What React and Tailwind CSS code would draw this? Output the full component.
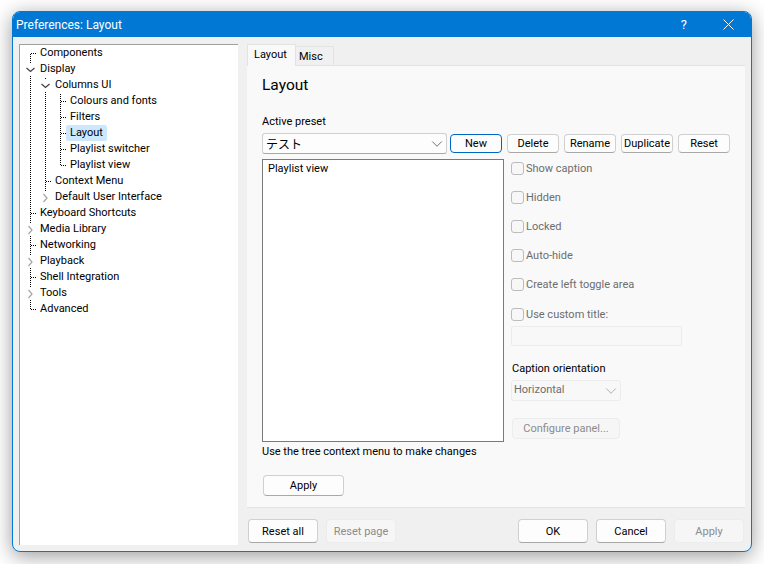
import { ChevronDown } from "lucide-react";

const FONT = "font-['Roboto','Open_Sans',sans-serif]";

// depth, kind, ancestors that keep their line running, last child at this level
const TREE = [
  { label: "Components", depth: 0, kind: "leaf", first: true },
  { label: "Display", depth: 0, kind: "open" },
  { label: "Columns UI", depth: 1, kind: "open", lines: [0] },
  { label: "Colours and fonts", depth: 2, kind: "leaf", lines: [0, 1] },
  { label: "Filters", depth: 2, kind: "leaf", lines: [0, 1] },
  { label: "Layout", depth: 2, kind: "leaf", lines: [0, 1], selected: true },
  { label: "Playlist switcher", depth: 2, kind: "leaf", lines: [0, 1] },
  { label: "Playlist view", depth: 2, kind: "leaf", lines: [0, 1], last: true },
  { label: "Context Menu", depth: 1, kind: "leaf", lines: [0] },
  { label: "Default User Interface", depth: 1, kind: "closed", lines: [0], last: true },
  { label: "Keyboard Shortcuts", depth: 0, kind: "leaf" },
  { label: "Media Library", depth: 0, kind: "closed" },
  { label: "Networking", depth: 0, kind: "leaf" },
  { label: "Playback", depth: 0, kind: "closed" },
  { label: "Shell Integration", depth: 0, kind: "leaf" },
  { label: "Tools", depth: 0, kind: "closed" },
  { label: "Advanced", depth: 0, kind: "leaf", last: true },
];

const colX = (d) => 10 + 15 * d;

// one pixel on, one pixel off, so the dots stay sharp like the native tree lines
function VDots({ x, from = 0, to = 16 }) {
  const dots = [];
  for (let y = from; y < to; y++) {
    if (y % 2 === 1) dots.push(<rect key={y} x={x} y={y} width="1" height="1" fill="#000" />);
  }
  return dots;
}

function HDots({ x, to }) {
  const dots = [];
  for (let i = x; i < to; i += 2) {
    dots.push(<rect key={i} x={i} y="8" width="1" height="1" fill="#000" />);
  }
  return dots;
}

function TreeGuides({ depth, kind, lines = [], first, last }) {
  const x = colX(depth);
  return (
    <svg width={16 + 15 * depth} height="16" className="shrink-0">
      {lines.map((d) => (
        <VDots key={d} x={colX(d)} />
      ))}
      {kind === "leaf" ? (
        <>
          <VDots x={x} from={first ? 8 : 0} to={last ? 8 : 16} />
          <HDots x={x + 1} to={x + 7} />
        </>
      ) : (
        <>
          <VDots x={x} to={2} />
          {!last && <VDots x={x} from={14} />}
          <HDots x={x + 7} to={x + 8} />
          {kind === "open" ? (
            <polyline points={`${x - 3.5},7 ${x + 0.5},10.5 ${x + 4.5},7`} fill="none" stroke="#404040" strokeWidth="1.2" />
          ) : (
            <polyline points={`${x - 1.5},5 ${x + 2},9 ${x - 1.5},13`} fill="none" stroke="#a6a6a6" strokeWidth="1.2" />
          )}
        </>
      )}
    </svg>
  );
}

function TreeRow({ item }) {
  return (
    <div className="flex h-4 items-center">
      <TreeGuides {...item} />
      <span className={`flex h-4 items-center rounded-[2px] px-1 leading-4 ${item.selected ? "bg-[#cce8ff]" : ""}`}>
        {item.label}
      </span>
    </div>
  );
}

function Button({ children, className = "", disabled, primary }) {
  let look = "border-[#d0d0d0] border-b-[#a8a8a8] bg-[#fdfdfd] text-black";
  if (disabled) look = "border-[#ececec] bg-[#f6f6f6] text-[#8c8c8c]";
  if (primary) look = "border-[#0067c0] bg-[#fdfdfd] text-black";
  return (
    <div className={`flex items-center justify-center rounded-[4px] border leading-none ${look} ${className}`}>
      {children}
    </div>
  );
}

function Check({ label, className = "" }) {
  return (
    <div className={`flex h-[13px] items-center gap-[2px] text-[#6d6d6d] ${className}`}>
      <div className="size-[13px] shrink-0 rounded-[3px] border border-[#bcbcbc] bg-[#f7f7f7]" />
      <span className="whitespace-nowrap leading-4">{label}</span>
    </div>
  );
}

export default function App() {
  return (
    <div className={`h-[564px] w-[764px] overflow-hidden bg-white pl-3 pt-[11px] text-[11px] text-black ${FONT}`}>
      <div className="flex h-[541px] w-[740px] flex-col overflow-hidden rounded-lg border border-[#0078d4] bg-[#f0f0f0] shadow-[0_4px_20px_rgba(0,0,0,0.4)]">
        {/* title bar */}
        <div className="flex h-[25px] shrink-0 items-center justify-between bg-[#0078d4] pl-[3px] pr-[17px] text-white">
          <span className="text-[12px]">Preferences: Layout</span>
          <div className="flex items-center gap-[36px]">
            <span className="text-[13px] leading-none">?</span>
            <svg width="11" height="11" viewBox="0 0 11 11" stroke="white" fill="none">
              <path d="M.5.5l10 10M10.5.5l-10 10" />
            </svg>
          </div>
        </div>

        <div className="flex min-h-0 flex-1 px-[6px] pb-[6px] pt-[7px]">
          {/* tree */}
          <div className="h-[501px] w-[219px] shrink-0 border-l border-t border-[#a0a0a0] bg-white">
            {TREE.map((item) => (
              <TreeRow key={item.label} item={item} />
            ))}
          </div>

          <div className="ml-[9px] flex w-[498px] flex-col">
            {/* tabs */}
            <div className="flex h-[21px] shrink-0 items-end">
              <div className="z-10 -mb-px h-[22px] w-[49px] border border-b-0 border-[#e3e3e3] bg-[#f9f9f9] pl-[6px] leading-[19px]">
                Layout
              </div>
              <div className="h-[19px] w-[38px] border border-b-0 border-l-0 border-[#e3e3e3] pl-[3px] leading-[19px]">
                Misc
              </div>
            </div>

            {/* page */}
            <div className="flex h-[443px] flex-col border-y border-[#e3e3e3] bg-[#f9f9f9] pl-[15px]">
              <div className="mt-2 text-[15.5px] leading-[22px]">Layout</div>
              <div className="mt-[18px] leading-4">Active preset</div>

              <div className="mt-[3px] flex h-[21px] items-start">
                <div className="flex h-[21px] w-[185px] items-center justify-between rounded-[3px] border border-[#d0d0d0] border-b-[#a8a8a8] bg-[#fdfdfd] pl-[3px]">
                  <span className="text-[12px] font-['Noto_Sans_CJK_JP',sans-serif]">テスト</span>
                  <ChevronDown size={18} strokeWidth={1.1} className="text-[#555]" />
                </div>
                <div className="mt-px ml-[3px] flex gap-[5px]">
                  <Button primary className="h-[19px] w-[52px]">New</Button>
                  <Button className="h-[19px] w-[52px]">Delete</Button>
                  <Button className="h-[19px] w-[52px]">Rename</Button>
                  <Button className="h-[19px] w-[52px]">Duplicate</Button>
                  <Button className="h-[19px] w-[52px]">Reset</Button>
                </div>
              </div>

              <div className="mt-[5px] flex h-[283px]">
                <div className="w-[242px] border border-[#7a7a7a] bg-white pl-[5px] pt-[1px] leading-4">
                  Playlist view
                </div>
                <div className="ml-[7px] flex flex-col pt-[3px]">
                  <Check label="Show caption" />
                  <Check label="Hidden" className="mt-4" />
                  <Check label="Locked" className="mt-4" />
                  <Check label="Auto-hide" className="mt-4" />
                  <Check label="Create left toggle area" className="mt-4" />
                  <Check label="Use custom title:" className="mt-[17px]" />
                  <div className="mt-[5px] h-5 w-[171px] rounded-[2px] border border-[#ececec] bg-[#f8f8f8]" />
                  <div className="ml-px mt-[15px] leading-4">Caption orientation</div>
                  <div className="mt-[3px] flex h-[21px] w-[110px] items-center justify-between rounded-[3px] border border-[#ececec] bg-[#f8f8f8] pl-[2px] text-[#6d6d6d]">
                    <span>Horizontal</span>
                    <ChevronDown size={18} strokeWidth={1.1} className="text-[#a0a0a0]" />
                  </div>
                  <Button disabled className="ml-px mt-[17px] h-[21px] w-[108px]">Configure panel...</Button>
                </div>
              </div>

              <div className="mt-[2px] leading-4">Use the tree context menu to make changes</div>
              <Button className="ml-px mt-[15px] h-[21px] w-[81px]">Apply</Button>
            </div>

            {/* footer */}
            <div className="mt-[11px] flex h-6 justify-between px-px">
              <div className="flex gap-2">
                <Button className="w-[70px]">Reset all</Button>
                <Button disabled className="w-[70px]">Reset page</Button>
              </div>
              <div className="flex gap-2">
                <Button className="w-[70px]">OK</Button>
                <Button className="w-[70px]">Cancel</Button>
                <Button disabled className="w-[70px]">Apply</Button>
              </div>
            </div>
          </div>
        </div>
      </div>
    </div>
  );
}
